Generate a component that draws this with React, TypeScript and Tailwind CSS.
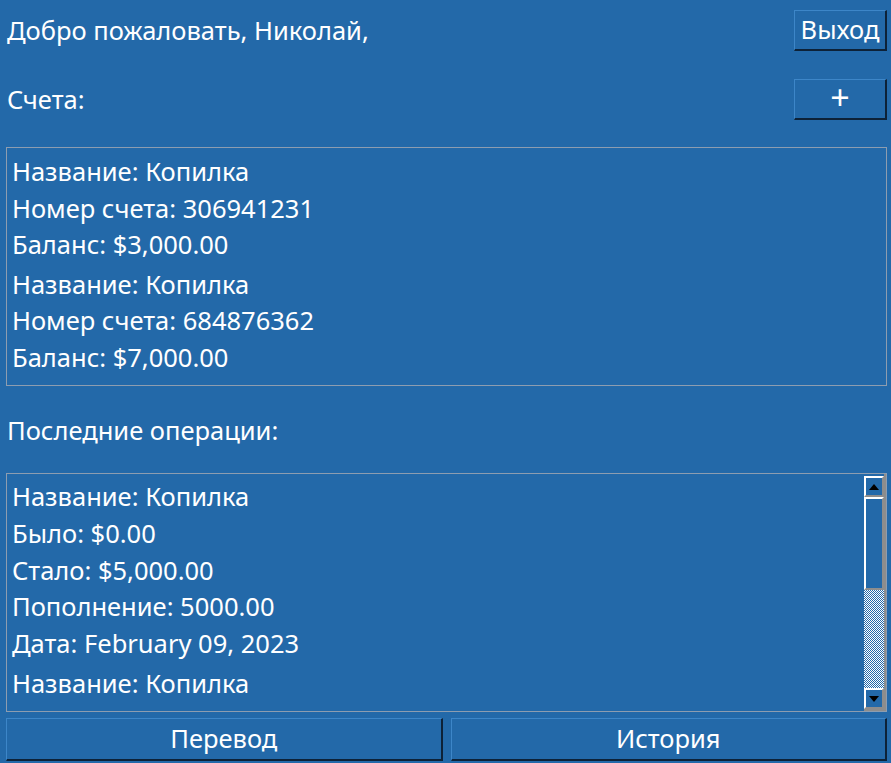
import React from "react";

const accounts = [
  { name: "Копилка", number: "306941231", balance: "$3,000.00" },
  { name: "Копилка", number: "684876362", balance: "$7,000.00" },
];

const operations = [
  "Название: Копилка",
  "Было: $0.00",
  "Стало: $5,000.00",
  "Пополнение: 5000.00",
  "Дата: February 09, 2023",
  "Название: Копилка",
];

function RaisedButton({ children, className }: { children: React.ReactNode; className?: string }) {
  return (
    <button
      className={
        "bg-[#2369a9] text-white border-t border-l border-t-[#3d86c8] border-l-[#3d86c8] border-r-2 border-b-2 border-r-[#0d2238] border-b-[#0d2238] leading-none " +
        (className ?? "")
      }
    >
      {children}
    </button>
  );
}

function ScrollBar() {
  return (
    <div className="flex flex-col w-[22px] border-r-2 border-b-2 border-[#8d8d8d] pt-[2px]">
      <div className="h-[21px] border-t-2 border-l-2 border-white border-r-2 border-b-2 border-r-[#8d8d8d] border-b-[#8d8d8d] flex items-center justify-center">
        <div className="w-0 h-0 border-l-[5px] border-r-[5px] border-b-[6px] border-l-transparent border-r-transparent border-b-black" />
      </div>
      <div className="h-[93px] border-t-2 border-l-2 border-white border-r-2 border-b-2 border-r-[#8d8d8d] border-b-[#8d8d8d]" />
      <div className="flex-1 bg-[repeating-conic-gradient(#ffffff_0_25%,#2369a9_0_50%)] bg-[length:2px_2px]" />
      <div className="h-[21px] border-t-2 border-l-2 border-white border-r-2 border-b-2 border-r-[#8d8d8d] border-b-[#8d8d8d] flex items-center justify-center">
        <div className="w-0 h-0 border-l-[5px] border-r-[5px] border-t-[6px] border-l-transparent border-r-transparent border-t-black" />
      </div>
    </div>
  );
}

export default function App() {
  return (
    <div className="w-[891px] h-[763px] bg-[#2369a9] text-white font-['Noto_Sans','Open_Sans',sans-serif] text-[25.5px] overflow-hidden flex flex-col pl-[6px] pr-[4px] pt-[9px]">
      {/* Header */}
      <div className="flex items-center justify-between h-[42px] pl-[1px]">
        <span>Добро пожаловать, Николай,</span>
        <RaisedButton className="w-[93px] h-[41px] text-[25.5px]">Выход</RaisedButton>
      </div>

      {/* Accounts */}
      <div className="flex items-center justify-between mt-[27px] h-[42px] pl-[1px]">
        <span>Счета:</span>
        <RaisedButton className="w-[93px] h-[41px] text-[34px] pb-[3px]">+</RaisedButton>
      </div>

      <div className="mt-[27px] h-[239px] border border-[#8d9db0] pl-[5px] pt-[5px]">
        {accounts.map((a, i) => (
          <div key={i} className={i > 0 ? "mt-[3px]" : ""}>
            <div className="h-[36.5px] leading-[36.5px]">Название: {a.name}</div>
            <div className="h-[36.5px] leading-[36.5px]">Номер счета: {a.number}</div>
            <div className="h-[36.5px] leading-[36.5px]">Баланс: {a.balance}</div>
          </div>
        ))}
      </div>

      <div className="mt-[24px] h-[40px] flex items-center pl-[1px]">Последние операции:</div>

      {/* Operations */}
      <div className="mt-[23px] h-[239px] border border-[#8d9db0] flex">
        <div className="flex-1 pl-[5px] pt-[4px] overflow-hidden">
          {operations.map((line, i) => (
            <div key={i} className={"h-[36.8px] leading-[36.8px] " + (i === 5 ? "mt-[3px]" : "")}>
              {line}
            </div>
          ))}
        </div>
        <ScrollBar />
      </div>

      {/* Bottom buttons */}
      <div className="mt-[6px] flex gap-[8px] h-[43px]">
        <RaisedButton className="flex-1 text-[25.5px]">Перевод</RaisedButton>
        <RaisedButton className="flex-1 text-[25.5px]">История</RaisedButton>
      </div>
    </div>
  );
}
